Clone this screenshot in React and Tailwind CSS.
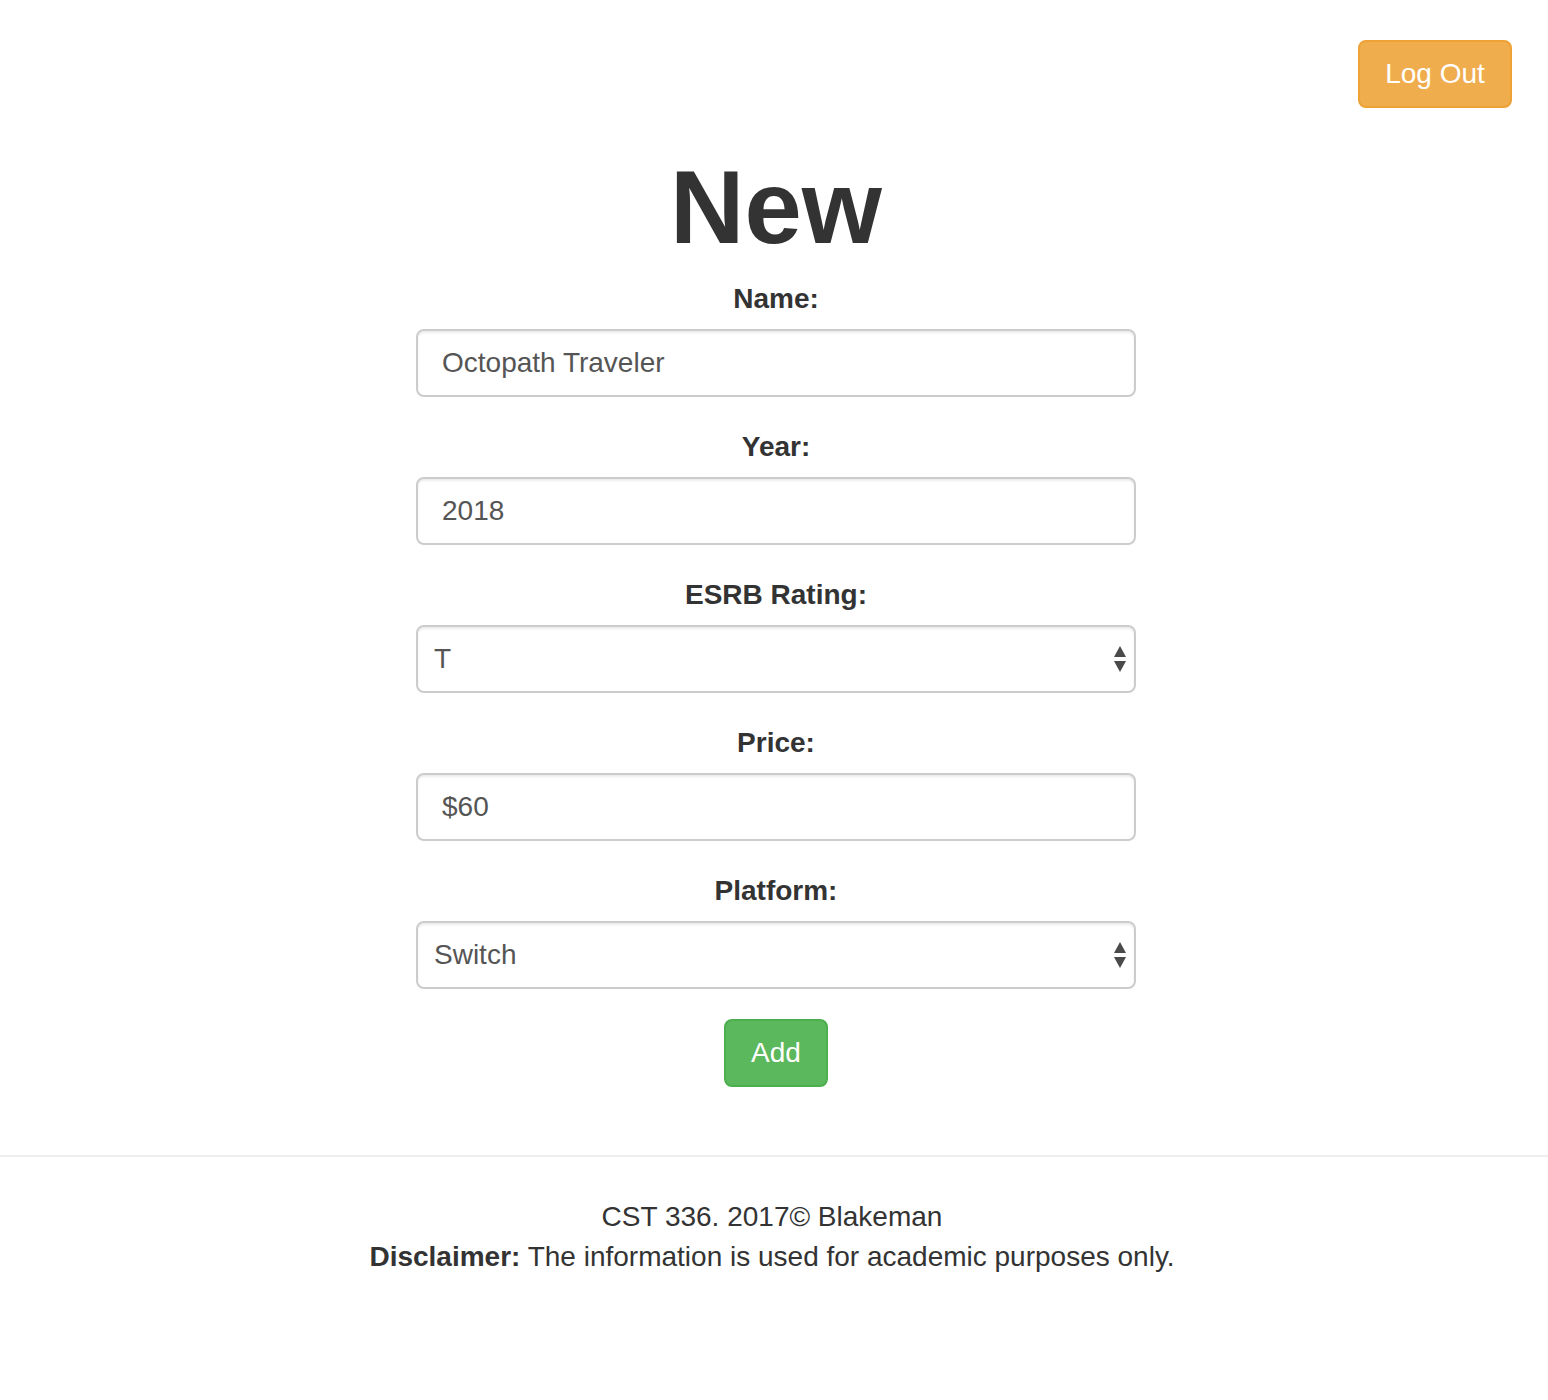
import React from "react";

const SelectArrows = () => (
  <svg className="absolute right-[9px] top-1/2 -translate-y-1/2" width="14" height="28" viewBox="0 0 14 28">
    <path d="M7 1 L13 12 L1 12 Z" fill="#4a4a4a" />
    <path d="M1 16 L13 16 L7 27 Z" fill="#4a4a4a" />
  </svg>
);

const Field = ({ label, value, select }) => (
  <div className="flex flex-col items-center mb-[30px]">
    <label className="block h-[40px] leading-[40px] text-[28px] font-bold text-[#333] mb-[10px]">
      {label}
    </label>
    <div className="relative w-[720px] h-[68px]">
      <div
        className={
          "w-full h-full border-2 border-[#ccc] rounded-[8px] bg-white flex items-center text-[28px] text-[#555] shadow-[inset_0_2px_2px_rgba(0,0,0,0.075)] " +
          (select ? "pl-[16px]" : "pl-[24px]")
        }
      >
        {value}
      </div>
      {select && <SelectArrows />}
    </div>
  </div>
);

export default function App() {
  return (
    <div className="min-h-[1400px] bg-white font-['Liberation_Sans',Arial,sans-serif] text-[#333]">
      {/* top bar */}
      <div className="flex justify-end pt-[40px] pr-[36px]">
        <button className="w-[154px] h-[68px] bg-[#f0ad4e] border-2 border-[#eea236] rounded-[8px] text-white text-[28px]">
          Log Out
        </button>
      </div>

      {/* form */}
      <div className="flex flex-col items-center pt-[38px] pl-[4px]">
        <h1 className="text-[103px] leading-[123px] font-bold text-[#333] mb-[10px]">New</h1>
        <Field label="Name:" value="Octopath Traveler" />
        <Field label="Year:" value="2018" />
        <Field label="ESRB Rating:" value="T" select />
        <Field label="Price:" value="$60" />
        <Field label="Platform:" value="Switch" select />
        <button className="w-[104px] h-[68px] bg-[#5cb85c] border-2 border-[#4cae4c] rounded-[8px] text-white text-[28px]">
          Add
        </button>
      </div>

      {/* footer */}
      <hr className="mt-[68px] border-0 border-t-2 border-[#eee]" />
      <footer className="pt-[40px] pr-[4px] text-center text-[28px] leading-[40px] text-[#333]">
        <div>CST 336. 2017© Blakeman</div>
        <div>
          <strong>Disclaimer:</strong> The information is used for academic purposes only.
        </div>
      </footer>
    </div>
  );
}
